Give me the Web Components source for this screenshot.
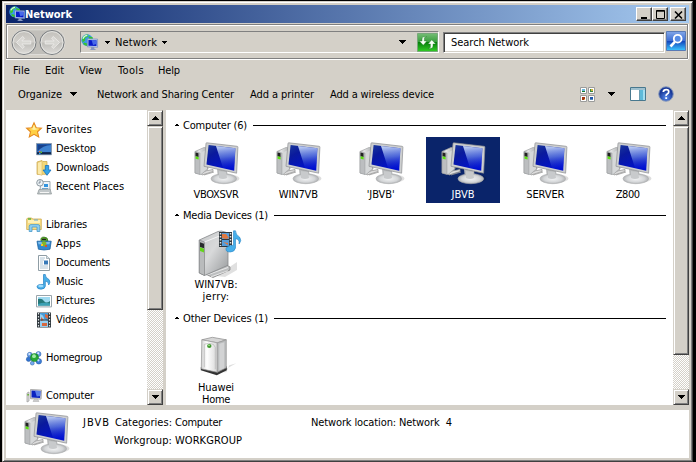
<!DOCTYPE html>
<html lang="en"><head><meta charset="utf-8"><title>Network</title>
<style>
html,body{margin:0;width:696px;height:462px;background:#000;overflow:hidden}
body{font:11px/13px "DejaVu Sans Condensed","DejaVu Sans",sans-serif;font-stretch:condensed;color:#000}
</style></head><body>
<explorer-window></explorer-window>
<script>
const ART={
computer:`<defs><linearGradient id="s" x1="0" y1="0" x2=".6" y2="1"><stop offset="0" stop-color="#1c3a9c"/><stop offset=".35" stop-color="#0a1a9c"/><stop offset="1" stop-color="#0010d0"/></linearGradient><linearGradient id="g" x1=".4" y1="0" x2=".5" y2="1"><stop offset="0" stop-color="#d4e4ff" stop-opacity=".9"/><stop offset=".5" stop-color="#7c9cf0" stop-opacity=".6"/><stop offset="1" stop-color="#2c40e0" stop-opacity=".1"/></linearGradient><linearGradient id="t" x1="0" x2="1"><stop offset="0" stop-color="#b4b6b8"/><stop offset=".3" stop-color="#e4e5e6"/><stop offset="1" stop-color="#a8aaac"/></linearGradient><radialGradient id="b"><stop offset="0" stop-color="#f4f5f6"/><stop offset=".7" stop-color="#d4d6d8"/><stop offset="1" stop-color="#b0b2b4"/></radialGradient></defs>
<ellipse cx="37" cy="38.5" rx="10.5" ry="4" fill="#000" opacity=".13"/><path d="M8 32L21 29.5V31.5L10 35ZM12 35l10-3" fill="#ddd" stroke="#999" stroke-width=".8"/>
<path d="M3 11.5L12 7.5L16 8V29L9 34.5L3 33Z" fill="url(#t)" stroke="#a0a2a4" stroke-width=".7"/><path d="M8 13L15 9.5V29L8.5 34Z" fill="#d6d8d9"/><path d="M3 11.5L8 13V34.5L3 33Z" fill="#bcbec0" stroke="#8b8d8f" stroke-width=".4"/><path d="M3.5 12.5l3 .7v3.8l-3-.7z" fill="#222"/><path d="M3.6 16.3l3 .7v2.6l-3-.8z" fill="#5ce010"/>
<path d="M25 29L35 31L36 38H26Z" fill="#b6b8ba"/><ellipse cx="31.8" cy="38.7" rx="12.8" ry="5" fill="url(#b)" stroke="#acaeb0" stroke-width=".6"/><path d="M27 31l7 1 1 6q-4 2-8 0z" fill="#c8cacc"/>
<path d="M14.8 2.8L45.2 6.3Q46 6.5 45.9 7.3L44.6 33.2L12 26.3L14 3.5Q14.1 2.7 14.8 2.8Z" fill="#cdcfd0" stroke="#8c8e91" stroke-width=".7"/><path d="M16.6 5L43.4 8.3L42.2 30.8L14.5 24.4Z" fill="url(#s)"/><path d="M24 5.9L43.4 8.3L42.3 28Q35 27.5 31 28Z" fill="url(#g)"/>`,
smallpc:`<path d="M1 5l2-1v9l-2 1z" fill="#ddd" stroke="#999" stroke-width=".7"/><path d="M1.5 6h1.2v1.5H1.5z" fill="#4a0"/><path d="M4.5 1.5l11 .6-.4 9-10.6-.4z" fill="#ddd" stroke="#999" stroke-width=".8"/><path d="M5.5 2.5l9 .5-.4 7-8.6-.4z" fill="#0b23c0"/><path d="M9 2.7l5.5.3-.2 5-3.6.5z" fill="#5c80e8"/><path d="M8.5 11h3l1.5 2.5H7z" fill="#ccc" stroke="#aaa" stroke-width=".5"/>`,
network:`<circle cx="5.8" cy="5.8" r="5.5" fill="#3a98ec"/><path d="M1 4Q3 0 7 .5L6 3 4 3.5 4 6 1.5 8ZM7 2l4 1v3L8 7ZM3 8l3 1 0 2.2Q3 11 2 9Z" fill="#36c430"/><path d="M1.8 4.4Q3 1.4 6 1.3" stroke="#d0f4e0" stroke-width="1.2" fill="none"/><path d="M6 4.5l9.6.3v7.7l-9.6-.4z" fill="#bccdec" stroke="#6c85bd" stroke-width=".6"/><path d="M7 5.6l7.6.2v5.6L7 11.1z" fill="#081cca"/><path d="M10 5.7l4.6.1v3.5l-3.3 1z" fill="#486ae8"/><path d="M9.5 12.3h3v1.5l2 1.2H8l1.5-1z" fill="#8898c0"/>`,
star:`<path d="M8 .8L10.2 5.7 15.4 6.2 11.5 9.8 12.7 15 8 12.3 3.3 15 4.5 9.8.6 6.2 5.8 5.7Z" fill="#ffd044" stroke="#e58a20" stroke-width="1.1"/><path d="M8 2.5l1.6 4 4 .3L8 8 4 6.8l2.5-.2z" fill="#fff1a0"/>`,
desktop:`<path d="M.5 2.5h15v11.2H.5z" fill="#1e56a8" stroke="#899bb0"/><path d="M2 4h12v8H2z" fill="#18418c"/><path d="M1 11Q7 4 15 4v7z" fill="#3e82d0"/><path d="M1 11.3h14v2H1z" fill="#10284c"/><path d="M3 10h1.5v1.5H3z" fill="#ef6a22"/><path d="M4.5 10.4H6v1.5H4.5z" fill="#58c42c"/><path d="M3 11.7h1.5v1.5H3z" fill="#29aef0"/>`,
downloads:`<path d="M1 2l5-1.5 1 1h4v12.8H1z" fill="#f4d978" stroke="#c9a445" stroke-width=".7"/><path d="M1.5 2.5L6 1v14.3l-4.5-1.2z" fill="#fbeaab" stroke="#d2ad54" stroke-width=".5"/><path d="M9.3 5.5h3.4V10H15l-4 5.3L7 10h2.3z" fill="#35a5e8" stroke="#1770bc" stroke-width=".8"/>`,
recent:`<path d="M5 2.5h9v9H4z" fill="#eef4f8" stroke="#8998a0" stroke-width=".8"/><path d="M8 5h4v3H8z" fill="#3194df"/><path d="M6 9.5h6" stroke="#6aa5d1"/><path d="M3 10.5l11-.5 1.5 5H1.5z" fill="#c2c8ca" stroke="#8a9294" stroke-width=".7"/><path d="M4 13.5h9" stroke="#f5f5f5"/><circle cx="4" cy="3.8" r="3.3" fill="#eef3f6" stroke="#8c989f"/><path d="M4 1.5V4H2.4" stroke="#607080" stroke-width=".8" fill="none"/>`,
libraries:`<path d="M.7 2l1-1h4l1 1h8.6v10.5H.7z" fill="#f7dd84" stroke="#cfaa4d" stroke-width=".8"/><path d="M2 3h12v3H2z" fill="#fff1b6"/><path d="M2 2h3" stroke="#43ad36" stroke-width="1.3"/><path d="M8 3h4" stroke="#64a6d8"/><path d="M3.2 14.5V9.2q0-1.6 1.8-1.6h7q1.8 0 1.8 1.6v5.3H11V10H6v4.5z" fill="#8dcef1" stroke="#4b9ac9" stroke-width=".8"/>`,
apps:`<path d="M5 5Q4 1 8 1t4 4L10 6H6z" fill="#57a426" stroke="#2b6617" stroke-width=".6"/><path d="M6 3.4h4" stroke="#222" stroke-width="1.2"/><path d="M1 5.2h14.2l-1.2 8q-6 1.6-11.6 0z" fill="#3388cf" stroke="#1c63a0" stroke-width=".8"/><path d="M2 6h12l-.6 2.2H2.6z" fill="#7cbced"/><path d="M5.5 6.5Q8 4 10.5 6.8L10 10.5H7.5z" fill="#84b52b"/><path d="M5 8h2v2H5z" fill="#f4cf29"/><path d="M9 9h2v2H9z" fill="#da542c"/>`,
documents:`<path d="M2.5.5h8l3 3v12h-11z" fill="#fff" stroke="#8f9da5"/><path d="M10.5.5v3h3" fill="#dae4ea" stroke="#8f9da5" stroke-width=".7"/><path d="M4 3h5M4 5h4M4 7h3M4 9h3M4 11h8M4 13h8" stroke="#a4bdcf" stroke-width=".9"/><path d="M8 5.5h4v4H8z" fill="#3679b9"/>`,
music:`<path d="M7.5.5h1.8Q9 3.5 13 5.6 15 8 12.7 11 13 7.5 9.3 7v5.2Q9 15 5 15.2 1 15 1 12.8 1.3 10 7.5 10.5z" fill="#49afe8" stroke="#2280c4" stroke-width=".7"/><ellipse cx="4.8" cy="12" rx="2.6" ry="1.3" fill="#9cdafa"/>`,
pictures:`<path d="M.5 2.5h15v11.4H.5z" fill="#fff" stroke="#99a4ab"/><path d="M2 4h12v8.5H2z" fill="#9fdaf1"/><path d="M2 6q4-1 6 2t6 0v4.5H2z" fill="#257879"/><path d="M2 11q6-2 12-.5v2H2z" fill="#3ba0b4"/>`,
videos:`<path d="M1 .5h14v15H1z" fill="#30383e"/><path d="M4 1h8v14H4z" fill="#479bd8"/><path d="M4 2q4 1 4 5l4 2v6H4z" fill="#96cff1"/><path d="M9 2l3 1v4L9 5zM5 5l3 3-3 1zM6 11h5v3H6z" fill="#d76840"/><path d="M4 8h8" stroke="#30383e"/><path d="M2.5 1v14M13.5 1v14" stroke="#dfe5e8" stroke-width="1.2" stroke-dasharray="1.5 1.5"/>`,
homegroup:`<g stroke="#285ca2" stroke-width=".5"><circle cx="3.8" cy="4.8" r="2.5" fill="#6aa0ea"/><circle cx="12.5" cy="4" r="2.5" fill="#6a9ce8"/><circle cx="2.6" cy="9.2" r="2.3" fill="#3172d0"/><circle cx="12.8" cy="11.3" r="2.8" fill="#3c7dd8"/><circle cx="6.3" cy="13.2" r="1.9" fill="#75aaf0"/></g><circle cx="8.5" cy="7.6" r="4" fill="#27a837" stroke="#0d7a21" stroke-width=".6"/><circle cx="8" cy="6.2" r="1.9" fill="#a3eba7"/><circle cx="3.3" cy="3.9" r="1" fill="#dcebff"/><circle cx="12.2" cy="3.2" r="1" fill="#dcebff"/><circle cx="12.4" cy="10.3" r="1.1" fill="#c8e0ff"/>`,
media:`<defs><linearGradient id="m" x1="0" x2="1" y2="1"><stop stop-color="#c6c8c9"/><stop offset=".45" stop-color="#d8d9da"/><stop offset="1" stop-color="#96999b"/></linearGradient></defs><path d="M25 46L46 32V40L34 47Z" fill="#000" opacity=".12"/><path d="M14 44L36 35l3 2v3L22 47.5z" fill="#bcbebf" stroke="#777" stroke-width=".7"/><path d="M16 45l21-7.5M20 46.8l17-6" stroke="#f4f4f4" stroke-width=".8"/><path d="M8.3 10L27 1.5q3-1.3 8 .8 2 .8 2 2v31L13.5 45.5 8.3 43z" fill="url(#m)" stroke="#85888a" stroke-width=".8"/><path d="M8.3 10l5.2 2v33.5l-5.2-2.5z" fill="#b9bbbc" stroke="#7a7c7e" stroke-width=".6"/><path d="M13.5 12L36 3" stroke="#f4f4f4"/><path d="M9 12.3l4 1.5v4.5l-4-1.3z" fill="#292b2d"/><path d="M9 17.3l4 1.4v3.8l-4-1.6z" fill="#63d51b"/><path d="M28 2h13v15H28z" fill="#30383e"/><path d="M31 3h7v13h-7z" fill="#579edb"/><path d="M31 4h4l3 4-3 1-4-1zM32 12l5 1v2z" fill="#df783f"/><path d="M31 9.5h7" stroke="#30383e"/><path d="M29.5 3v13M39.5 3v13" stroke="#dfe5e8" stroke-width="1.5" stroke-dasharray="1.5 1.5"/><path d="M42.5.8h2q0 4 4 6.2 2.7 3.5-.4 7 .6-5-3.6-5.3V18q-1 4-5.2 4-4.8 0-4.3-3.5 1.2-3 7.5-3.3z" fill="#46afea" stroke="#2683c5" stroke-width=".6"/>`,
device:`<defs><linearGradient id="d" x1="0" x2="1"><stop stop-color="#d0d0d0"/><stop offset=".35" stop-color="#fff"/><stop offset="1" stop-color="#d7d7d7"/></linearGradient></defs><g transform="translate(-.7 1.3)"><path d="M28 38L44 29 37 31 34 38z" fill="#000" opacity=".13"/><path d="M8.5 33v3l16 5 10-5v-4l-10 4z" fill="#333"/><path d="M9.5 5.5L20 3l14 2.5-9 3z" fill="#d6d6d6" stroke="#8b8b8b" stroke-width=".7"/><path d="M9.5 5.5L25 8.5V38L9 34.5z" fill="url(#d)" stroke="#959595" stroke-width=".7"/><path d="M25 8.5l9-3v28L25 38z" fill="#b9bbbc" stroke="#959595" stroke-width=".7"/><path d="M27 9.5l5-1.5v26l-5 2z" fill="#d2d3d4"/><path d="M12 33V10q4-2 9 0l2 3v22" fill="none" stroke="#b4b4b4" stroke-width=".7"/><ellipse cx="17" cy="11.7" rx="2.2" ry="1.9" fill="#419930"/><path d="M16 11h1.5" stroke="#c4ffab"/></g>`,
nav:`<defs><linearGradient id="n" y2="1" x2="0"><stop stop-color="#c2c0bb"/><stop offset=".48" stop-color="#d2d0cc"/><stop offset=".52" stop-color="#bebdb9"/><stop offset="1" stop-color="#dfddda"/></linearGradient></defs><path d="M13 .8H43Q54 2 54 13T43 25.5H13Q1 24 1 13T13 .8Z" fill="#c1bfba" stroke="#dedcd8"/><g fill="url(#n)" stroke="#777b7f" stroke-width="1"><circle cx="13" cy="13.5" r="12"/><circle cx="41" cy="13.5" r="12"/></g><g fill="none" stroke="#e7e6e3" stroke-width=".9"><circle cx="13" cy="13.5" r="10.9"/><circle cx="41" cy="13.5" r="10.9"/></g><g fill="#d8d7d3" stroke="#efeeec" stroke-width=".8"><path d="M5.5 13.5l6.2-6 1.7 1.7L10.8 12h9v3h-9l2.6 2.8-1.7 1.7z"/><path d="M48.5 13.5l-6.2-6-1.7 1.7 2.6 2.8h-9v3h9l-2.6 2.8 1.7 1.7z"/></g>`,
refresh:`<defs><linearGradient id="r" y2="1" x2="0"><stop stop-color="#75bd75"/><stop offset=".48" stop-color="#389e3b"/><stop offset=".5" stop-color="#07800c"/><stop offset="1" stop-color="#32ce25"/></linearGradient></defs><path d="M.5.5h20v18H.5z" fill="url(#r)" stroke="#78a87a"/><path d="M9.6 3.6L7.4 4.8V8H10L6.3 12.2 2.3 8H5V6Q5 3.4 9.6 3.6ZM11 15.6l2.4-1.2V11H11L14.7 6.8l4 4.2H16V13q0 2.8-5 2.6z" fill="#f6fff5" stroke="#15751c" stroke-width=".4"/>`,
search:`<defs><linearGradient id="q" y2="1" x2="0"><stop stop-color="#83a7e8"/><stop offset=".48" stop-color="#3d6fd4"/><stop offset=".52" stop-color="#1347bd"/><stop offset="1" stop-color="#3cc7ff"/></linearGradient></defs><path d="M.5.5h19v19H.5z" fill="url(#q)" stroke="#597ab5"/><circle cx="11.7" cy="7.7" r="3.9" fill="#578ce4" stroke="#fff" stroke-width="1.8"/><path d="M8.8 10.8L4.5 15.5" stroke="#fff" stroke-width="2.6"/>`,
views:`<g fill="#fff" stroke="#9b9c9b"><path d="M.5.5h6v6h-6zM8.5.5h6v6h-6zM.5 8.5h6v6h-6zM8.5 8.5h6v6h-6z"/></g><path d="M2 2h3v3H2z" fill="#67b8dc"/><path d="M2 4h3v1H2z" fill="#167a2a"/><path d="M10 2h3v3h-3z" fill="#34843c"/><path d="M11 2h2v2h-2z" fill="#d2b43b"/><path d="M2 10h3v3H2z" fill="#a43713"/><path d="M4 12h1v1H4z" fill="#eab63c"/><path d="M10 10h3v3h-3z" fill="#2057ad"/><path d="M10 12h3v1h-3z" fill="#5387ba"/>`,
preview:`<path d="M.5.5h15v13H.5z" fill="#fff" stroke="#48788e"/><path d="M1 1h14v2H1z" fill="#9fc0ce"/><path d="M10 3h5v10h-5z" fill="#5ebad9"/><path d="M13 3h2v10h-2z" fill="#a3def0"/><path d="M9.5 3v10" stroke="#6c9eb3"/>`,
help:`<defs><radialGradient id="h" cy=".75"><stop stop-color="#5689eb"/><stop offset="1" stop-color="#193999"/></radialGradient></defs><circle cx="8" cy="8" r="7.3" fill="url(#h)" stroke="#8c9dbc"/><path d="M5.3 6Q5.5 3.6 8.2 3.6T10.7 6Q10.7 7.2 9.2 8T8.2 10M8.2 11.2v1.8" fill="none" stroke="#fff" stroke-width="1.8"/>`,
down:`<path d="M0 0h7L3.5 4z" shape-rendering="crispEdges"/>`,
up:`<path d="M0 4h7L3.5 0z" shape-rendering="crispEdges"/>`,
collapse:`<path d="M0 3.2h6L3 0z" shape-rendering="crispEdges"/>`,
min:`<path d="M1 7h6v2H1z"/>`,max:`<path d="M.5 .5h8v8h-8zM0 1.2h9" fill="none" stroke="#000"/>`,close:`<path d="M1 1.5l7 7M8 1.5l-7 7" stroke="#000" stroke-width="1.6"/>`
};
const BOX={nav:[55,27],refresh:[21,19],search:[20,20],computer:[48,48],media:[50,50],device:[46,46],views:[15,15],preview:[16,14],down:[7,4],up:[7,4],collapse:[6,4],min:[9,9],max:[9,9],close:[9,9]};
class SysIcon extends HTMLElement{connectedCallback(){const n=this.getAttribute('name'),[w,h]=BOX[n]||[16,16],W=+this.getAttribute('width')||w,H=W*h/w;
this.attachShadow({mode:'open'}).innerHTML=`<style>:host{display:block;flex:none;width:${W}px;height:${H}px}svg{display:block;overflow:visible}</style><svg width="${W}" height="${H}" viewBox="0 0 ${w} ${h}">${ART[n]}</svg>`}}
customElements.define('sys-icon',SysIcon);

/* One line of text, tracked so that it fills the given width. */
class FitText extends HTMLElement{connectedCallback(){this.attachShadow({mode:'open'}).innerHTML=`<style>:host{display:block;flex:none;white-space:pre;width:max-content}span{display:block;width:max-content;white-space:pre}</style><span></span>`;
const s=this.shadowRoot.querySelector('span'),t=this.getAttribute('text'),w=+this.getAttribute('w');s.textContent=t;
if(w){this.style.width=w+'px';const n=s.getBoundingClientRect().width;s.style.letterSpacing=((w-n)/t.length)+'px'}}}
customElements.define('fit-text',FitText);

class BevelButton extends HTMLElement{connectedCallback(){this.attachShadow({mode:'open'}).innerHTML=`<style>:host{box-sizing:border-box;display:flex;align-items:center;justify-content:center;flex:none;width:16px;height:16px;background:#d4d0c8;border:1px solid;border-color:#d4d0c8 #404040 #404040 #d4d0c8;box-shadow:inset 1px 1px #fff,inset -1px -1px #808080}</style><slot></slot>`}}
customElements.define('bevel-button',BevelButton);

class ScrollBar extends HTMLElement{connectedCallback(){this.attachShadow({mode:'open'}).innerHTML=`<style>:host{display:flex;flex-direction:column;flex:none;width:16px;height:295px;background:repeating-conic-gradient(#fff 0 25%,#d4d0c8 0 50%) 0 0/2px 2px}.thumb{height:${this.getAttribute('thumb')}px}i{flex:1}</style><bevel-button><sys-icon name="up"></sys-icon></bevel-button><bevel-button class="thumb"></bevel-button><i></i><bevel-button><sys-icon name="down"></sys-icon></bevel-button>`}}
customElements.define('scroll-bar',ScrollBar);

class TitleBar extends HTMLElement{connectedCallback(){this.attachShadow({mode:'open'}).innerHTML=`<style>:host{box-sizing:border-box;display:flex;align-items:center;height:18px;padding:0 3px 0 3px;background:linear-gradient(90deg,#0a246a,#a6caf0);color:#fff;font-weight:bold}fit-text{flex:1}bevel-button{height:14px;border-color:#fff #404040 #404040 #fff;box-shadow:inset -1px -1px #808080}.c{margin-left:2px}</style>
<sys-icon name="network"></sys-icon><fit-text text="Network" w="47"></fit-text><bevel-button><sys-icon name="min"></sys-icon></bevel-button><bevel-button><sys-icon name="max"></sys-icon></bevel-button><bevel-button class="c"><sys-icon name="close"></sys-icon></bevel-button>`}}
customElements.define('title-bar',TitleBar);

class AddressBand extends HTMLElement{connectedCallback(){this.attachShadow({mode:'open'}).innerHTML=`<style>:host{box-sizing:border-box;display:flex;margin-top:1px;padding:4px 0 0 4px;border:1px solid #808080;box-shadow:inset 1px 1px #fff,0 1px #fff,1px 0 #fff;width:682px;height:35px}
.a{box-sizing:border-box;display:flex;align-items:center;width:359px;height:22px;margin:2px 0 0 14px;border:1px solid;border-color:#808080 #fff #fff #808080}.a .n{margin:0 5px 0 7px}.a .r{margin-left:auto;margin-right:11px}
.s{box-sizing:border-box;display:flex;align-items:center;width:222px;height:21px;margin:3px 0 0 4px;padding-left:7px;background:#fff;border:1px solid;border-color:#808080 #fff #fff #808080;box-shadow:inset 1px 1px #404040,inset -1px -1px #d4d0c8}.q{margin:2px 0 0 1px}</style>
<sys-icon name="nav"></sys-icon><div class="a"><sys-icon name="network" width="17"></sys-icon><sys-icon name="down" width="5" class="n"></sys-icon><fit-text text="Network" w="42"></fit-text><sys-icon name="down" width="5" style="margin-left:5px"></sys-icon><sys-icon name="down" class="r"></sys-icon><sys-icon name="refresh"></sys-icon></div><div class="s"><fit-text text="Search Network" w="78"></fit-text></div><sys-icon class="q" name="search"></sys-icon>`}}
customElements.define('address-band',AddressBand);

class CommandBars extends HTMLElement{connectedCallback(){this.attachShadow({mode:'open'}).innerHTML=`<style>:host{box-sizing:border-box;display:block;height:51px;padding-top:1px}nav,div{display:flex;align-items:center}nav{height:20px;padding-left:7px}div{height:28px;padding-left:12px}</style>
<nav><fit-text text="File" w="17"></fit-text><fit-text text="Edit" w="19" style="margin-left:15px"></fit-text><fit-text text="View" w="23" style="margin-left:15px"></fit-text><fit-text text="Tools" w="26" style="margin-left:16px"></fit-text><fit-text text="Help" w="22" style="margin-left:14px"></fit-text></nav>
<div><fit-text text="Organize" w="44"></fit-text><sys-icon name="down" style="margin:0 20px 0 8px"></sys-icon><fit-text text="Network and Sharing Center" w="137"></fit-text><fit-text text="Add a printer" w="64" style="margin-left:16px"></fit-text><fit-text text="Add a wireless device" w="104" style="margin-left:16px"></fit-text><sys-icon name="views" style="margin-left:146px"></sys-icon><sys-icon name="down" style="margin:0 15px 0 13px"></sys-icon><sys-icon name="preview"></sys-icon><sys-icon name="help" style="margin-left:12px"></sys-icon></div>`}}
customElements.define('command-bars',CommandBars);

class NavTree extends HTMLElement{connectedCallback(){const rows=[['star','Favorites',46],['desktop','Desktop',40,1],['downloads','Downloads',53,1],['recent','Recent Places',68,1],0,['libraries','Libraries',41],['apps','Apps',25,1],['documents','Documents',54,1],['music','Music',27,1],['pictures','Pictures',39,1],['videos','Videos',32,1],0,['homegroup','Homegroup',56],0,['smallpc','Computer',48]];
this.attachShadow({mode:'open'}).innerHTML=`<style>:host{box-sizing:border-box;display:block;width:141px;height:295px;padding-top:10px;background:#fff;overflow:hidden}div{box-sizing:border-box;display:flex;align-items:center;gap:4px;height:19px;padding-left:20px}.k{padding-left:30px}</style>`+rows.map(r=>r?`<div class="${r[3]?'k':''}"><sys-icon name="${r[0]}"></sys-icon><fit-text text="${r[1]}" w="${r[2]}"></fit-text></div>`:'<div></div>').join('')}}
customElements.define('nav-tree',NavTree);

class GroupHead extends HTMLElement{connectedCallback(){this.attachShadow({mode:'open'}).innerHTML=`<style>:host{display:flex;align-items:center;height:14px;padding-left:8px}fit-text{margin:0 6px 0 3px}hr{flex:1;height:1px;border:0;margin:0;background:#000}</style><sys-icon name="collapse"></sys-icon><fit-text text="${this.getAttribute('text')}" w="${this.getAttribute('w')}"></fit-text><hr>`}}
customElements.define('group-head',GroupHead);

class DeviceTile extends HTMLElement{connectedCallback(){const l=this.getAttribute('label').split('|'),w=this.getAttribute('w').split('|');
this.attachShadow({mode:'open'}).innerHTML=`<style>:host{box-sizing:border-box;display:flex;flex-direction:column;align-items:center;flex:none;width:74px;height:66px;padding-top:3px}:host([selected]){background:#0a246a;color:#fff}sys-icon{height:48px}fit-text+fit-text{line-height:11px}</style><sys-icon name="${this.getAttribute('icon')}"></sys-icon>`+l.map((t,i)=>`<fit-text text="${t}" w="${w[i]}"></fit-text>`).join('')}}
customElements.define('device-tile',DeviceTile);

class DeviceList extends HTMLElement{connectedCallback(){const pcs=[['VBOXSVR',45],['WIN7VB',39],["'JBVB'",28],['JBVB',23],['SERVER',38],['Z800',24]];
this.attachShadow({mode:'open'}).innerHTML=`<style>:host{box-sizing:border-box;display:block;width:507px;height:295px;padding-top:8px;background:#fff;overflow:hidden}group-head{width:492px}.row{display:flex;gap:8.33px;padding-left:13px}</style>
<group-head text="Computer (6)" w="64"></group-head><div class="row" style="height:71px;padding-top:5px">${pcs.map((p,i)=>`<device-tile icon="computer" label="${p[0]}" w="${p[1]}" ${i==3?'selected':''}></device-tile>`).join('')}</div>
<group-head text="Media Devices (1)" w="85"></group-head><div class="row" style="height:84px;padding-top:5px"><device-tile icon="media" label="WIN7VB:|jerry:" w="43|27"></device-tile></div>
<group-head text="Other Devices (1)" w="85"></group-head><div class="row" style="padding-top:5px"><device-tile icon="device" label="Huawei|Home" w="36|28"></device-tile></div>`}}
customElements.define('device-list',DeviceList);

class DetailsPane extends HTMLElement{connectedCallback(){this.attachShadow({mode:'open'}).innerHTML=`<style>:host{display:flex;height:48px;margin-top:5px;background:#fff;overflow:hidden}sys-icon{margin:0 0 0 16px}.n{margin:6px 0 0 13px}.g{display:grid;grid-template-columns:58px 133px 85px 60px;column-gap:3px;row-gap:5px;margin:6px 0 0 4px;align-content:start}.r{justify-self:end}</style>
<sys-icon name="computer"></sys-icon><fit-text class="n" text="JBVB" w="27"></fit-text><div class="g"><fit-text class="r" text="Categories:" w="57"></fit-text><fit-text text="Computer" w="47"></fit-text><fit-text text="Network location:" w="85"></fit-text><fit-text text="Network  4" w="53"></fit-text><fit-text class="r" text="Workgroup:" w="58"></fit-text><fit-text text="WORKGROUP" w="67"></fit-text></div>`}}
customElements.define('details-pane',DetailsPane);

class ExplorerWindow extends HTMLElement{connectedCallback(){this.attachShadow({mode:'open'}).innerHTML=`<style>:host{box-sizing:border-box;display:block;width:691px;height:461px;margin:1px 0 0 2px;padding:3px 2px 0 3px;background:#d4d0c8;border:1px solid;border-color:#d4d0c8 #404040 #404040 #d4d0c8;box-shadow:inset 1px 1px #fff,inset -1px -1px #808080}main{display:flex}.split{width:3px}title-bar,details-pane{width:683px}</style>
<title-bar></title-bar><address-band></address-band><command-bars></command-bars><main><nav-tree></nav-tree><scroll-bar thumb="184"></scroll-bar><div class="split"></div><device-list></device-list><scroll-bar thumb="229"></scroll-bar></main><details-pane></details-pane>`}}
customElements.define('explorer-window',ExplorerWindow);
</script></body></html>
